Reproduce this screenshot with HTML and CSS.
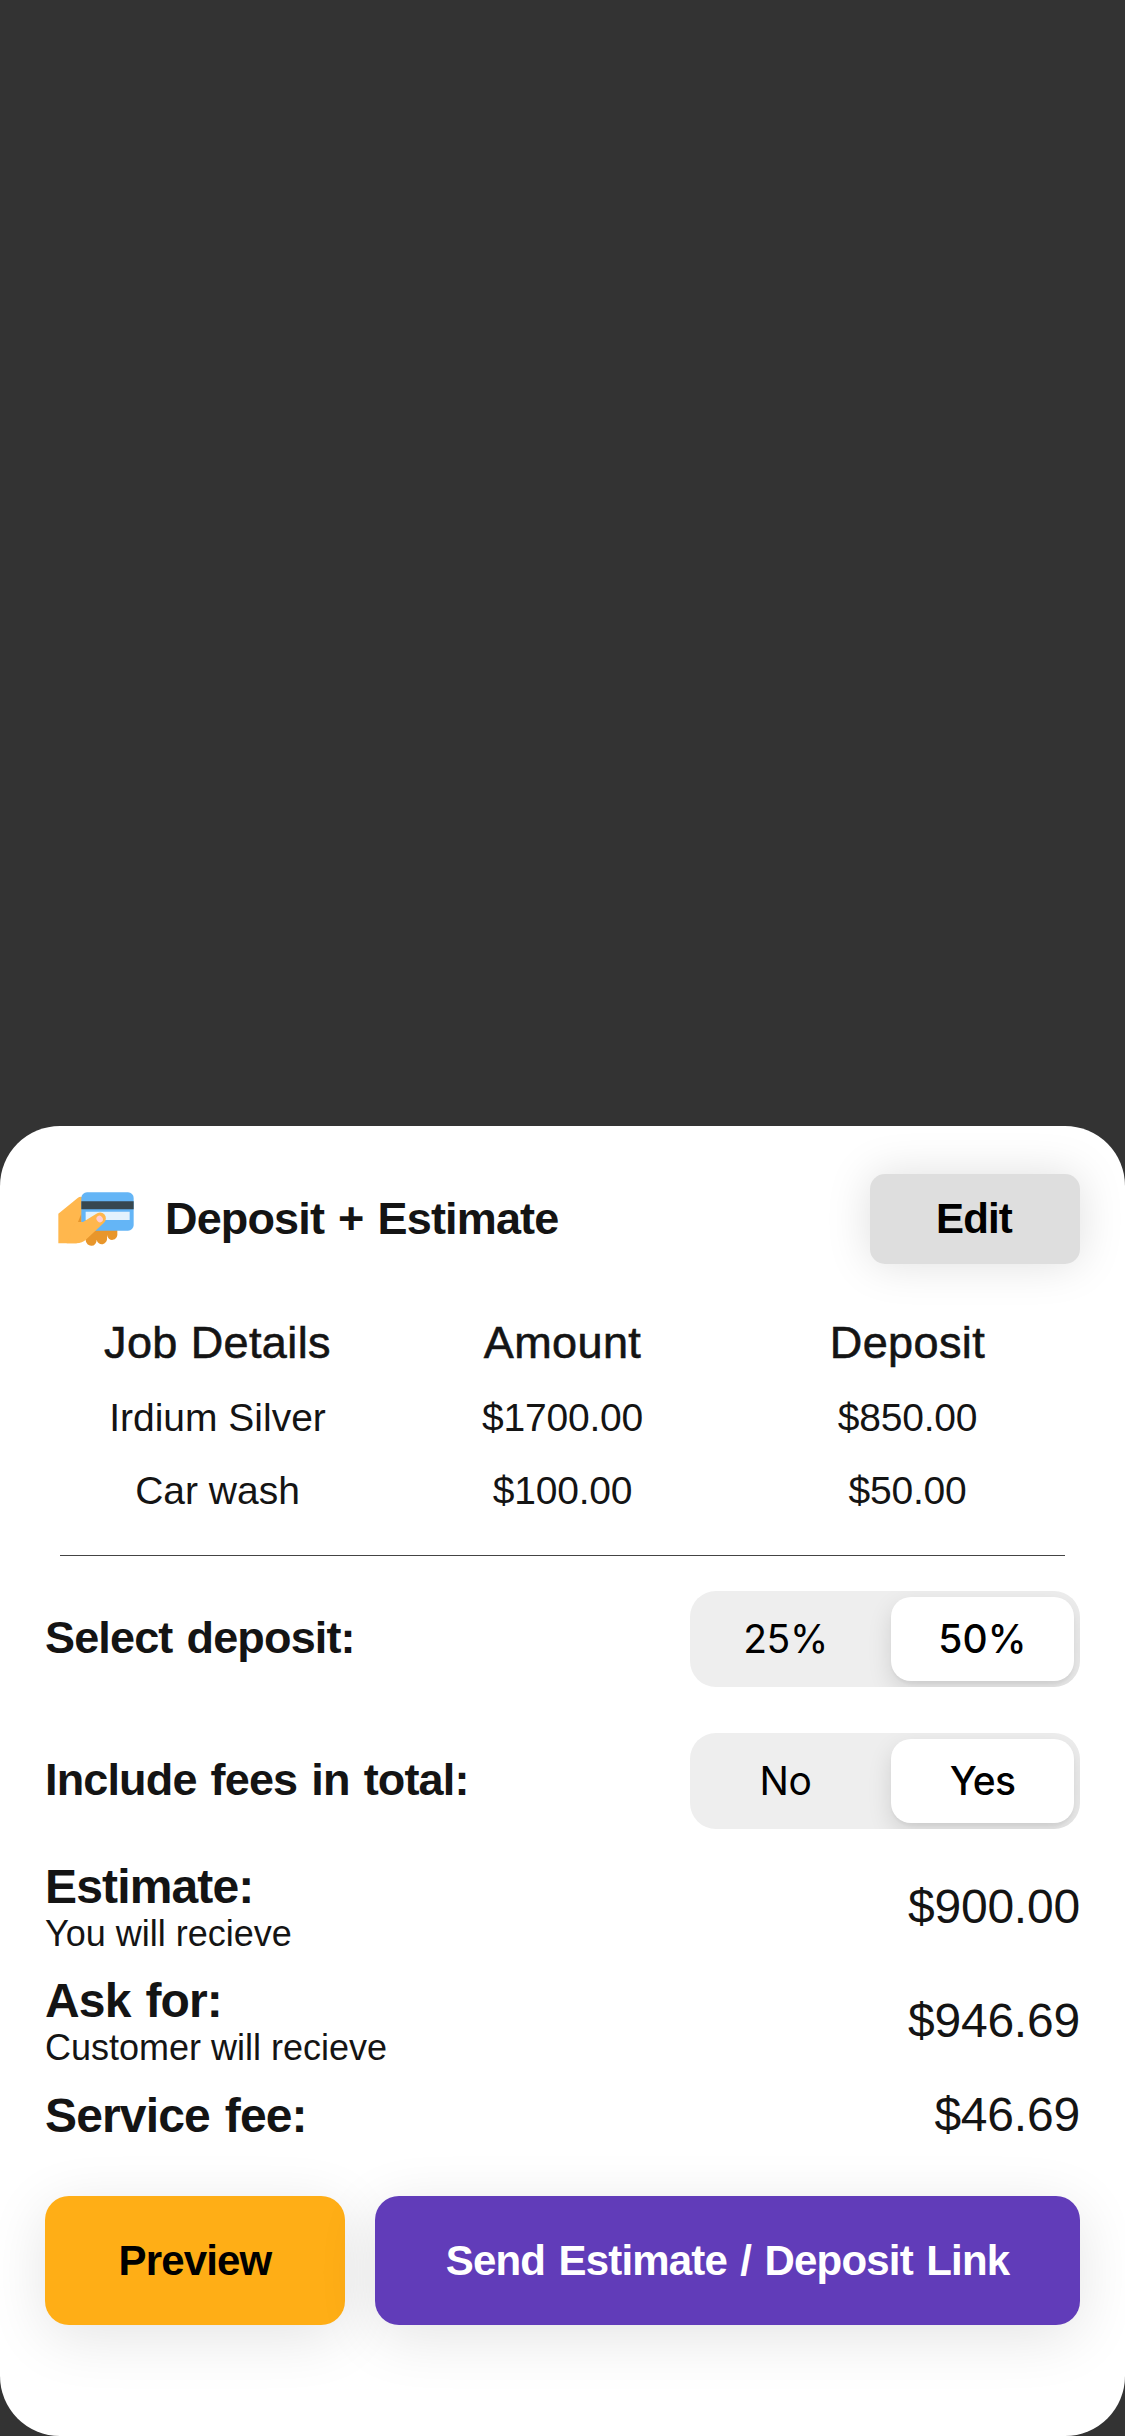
FILE: index.html
```
<!DOCTYPE html>
<html lang="en">
<head>
<meta charset="utf-8">
<title>Deposit + Estimate</title>
<link rel="stylesheet" href="styles.css">
</head>
<body>
<main class="sheet">
  <header class="header">
    <svg class="header-icon" viewBox="54 63 228 162" aria-hidden="true">
      <path class="fingers" d="M134 170h98v18a15 16 0 0 1-31 4v8a15 16 0 0 1-31 6a16 17 0 0 1-33 2z"/>
      <path class="palm" d="M55 128L113 81Q119 76 127 78V155L110 217H55z"/>
      <path class="fingers" d="M124 128v25h-10z"/>
      <rect class="card" x="124" y="64" width="157" height="115" rx="17"/>
      <path class="stripe" d="M124 91h157v24H124z"/>
      <path class="label" d="M137 122h132v25H137z"/>
      <path class="palm" d="M108 153h21L168 129a17 17 0 0 1 24 26L139 205Q127 217 109 217H80z"/>
      <ellipse class="nail" cx="179" cy="144" rx="9" ry="10.500" transform="rotate(-35 179 144)"/>
    </svg>
    <h1 class="title semibold">Deposit + Estimate</h1>
    <button class="edit semibold">Edit</button>
  </header>

  <section class="jobs">
    <div class="jobs-head">Job Details</div><div class="jobs-head">Amount</div><div class="jobs-head">Deposit</div>
    <div>Irdium Silver</div><div class="num">$1700.00</div><div class="num">$850.00</div>
    <div>Car wash</div><div class="num">$100.00</div><div class="num">$50.00</div>
  </section>
  <hr class="divider">

  <section class="options">
    <div class="option">
      <span class="option-label semibold">Select deposit:</span>
      <div class="segmented"><span class="segment">25%</span><span class="segment selected">50%</span></div>
    </div>
    <div class="option">
      <span class="option-label semibold">Include fees in total:</span>
      <div class="segmented"><span class="segment">No</span><span class="segment selected yes">Yes</span></div>
    </div>
  </section>

  <section class="totals">
    <div class="total">
      <div><div class="total-name semibold">Estimate:</div><div class="total-note">You will recieve</div></div>
      <div class="amount">$900.00</div>
    </div>
    <div class="total">
      <div><div class="total-name semibold">Ask for:</div><div class="total-note">Customer will recieve</div></div>
      <div class="amount">$946.69</div>
    </div>
    <div class="total">
      <div class="total-name semibold">Service fee:</div>
      <div class="amount">$46.69</div>
    </div>
  </section>

  <footer class="actions">
    <button class="action preview semibold">Preview</button>
    <button class="action send semibold">Send Estimate / Deposit Link</button>
  </footer>
</main>
</body>
</html>
```
FILE: styles.css
```
* {
  box-sizing: border-box;
}

body {
  margin: 0;
  padding-top: 1126px;
  min-height: 2436px;
  background: #333;
  color: #141414;
  font-family: "Liberation Sans", Arial, sans-serif;
}

button {
  border: 0;
  padding: 0;
  font-family: inherit;
  font-size: 42px;
}

.semibold {
  font-weight: 700;
  letter-spacing: -0.85px;
  word-spacing: 2.4px;
}

.sheet {
  height: 1310px;
  padding: 48px 45px 0;
  background: #fff;
  border-radius: 60px;
  overflow: hidden;
}

.header {
  display: flex;
  align-items: center;
  height: 90px;
}

.header-icon {
  width: 76px;
  height: 54px;
  margin: 0 31px 1px 13px;
}

.palm { fill: #ffb74d; }
.fingers { fill: #e8962b; }
.card { fill: #64b5f6; }
.stripe { fill: #37474f; }
.label { fill: #e3f2fd; }
.nail { fill: #ffcdd2; }

.title {
  flex: 1;
  margin: 0;
  font-size: 45px;
}

.edit {
  width: 210px;
  height: 90px;
  padding-right: 2px;
  border-radius: 15px;
  background: #dedede;
  color: #000;
  box-shadow: 0 0 45px rgba(0, 0, 0, 0.13);
}

.jobs {
  display: grid;
  grid-template-columns: repeat(3, 1fr);
  grid-template-rows: 76px 73px 73px;
  margin-top: 41px;
  text-align: center;
  font-size: 39px;
  line-height: 73px;
}

.jobs-head {
  font-size: 45px;
  line-height: 76px;
  letter-spacing: 0.4px;
  -webkit-text-stroke: 0.6px currentColor;
}

.num {
  letter-spacing: -0.2px;
}

.divider {
  height: 1px;
  margin: 28px 15px 0;
  border: 0;
  background: #444;
}

.options {
  display: grid;
  gap: 46px;
  margin-top: 35px;
}

.option {
  display: flex;
  align-items: center;
  justify-content: space-between;
  height: 96px;
}

.option-label {
  padding-bottom: 3px;
  font-size: 45px;
}

.segmented {
  display: grid;
  grid-template-columns: 201px 183px;
  width: 390px;
  height: 96px;
  padding: 6px 6px 6px 0;
  border-radius: 26px;
  background: #eee;
  overflow: hidden;
}

.segment {
  color: #000;
  font-family: Inter, sans-serif;
  font-size: 39px;
  line-height: 84px;
  text-align: center;
  letter-spacing: -0.4px;
}

.segment:first-child {
  padding-right: 10px;
}

.selected {
  border-radius: 20px;
  background: #fff;
  font-weight: 500;
  letter-spacing: 0.2px;
  box-shadow: 0 9px 24px rgba(0, 0, 0, 0.12), 0 3px 3px rgba(0, 0, 0, 0.04);
}

.yes {
  letter-spacing: -0.8px;
}

.totals {
  display: grid;
  gap: 21px;
  margin-top: 32px;
}

.total {
  display: flex;
  align-items: center;
  justify-content: space-between;
}

.total-name,
.amount {
  font-size: 48px;
  line-height: 52px;
}

.total-note {
  font-size: 36px;
  line-height: 41px;
}

.amount {
  letter-spacing: -0.2px;
}

.total > div + .amount {
  margin-bottom: 1px;
}

.actions {
  display: grid;
  grid-template-columns: 300px 1fr;
  gap: 30px;
  margin-top: 54px;
}

.action {
  height: 129px;
  border-radius: 24px;
  box-shadow: 0 12px 60px rgba(0, 0, 0, 0.11);
}

.preview {
  background: #ffae16;
  color: #000;
}

.send {
  background: #613cb9;
  color: #fff;
  letter-spacing: -0.8px;
}
```
